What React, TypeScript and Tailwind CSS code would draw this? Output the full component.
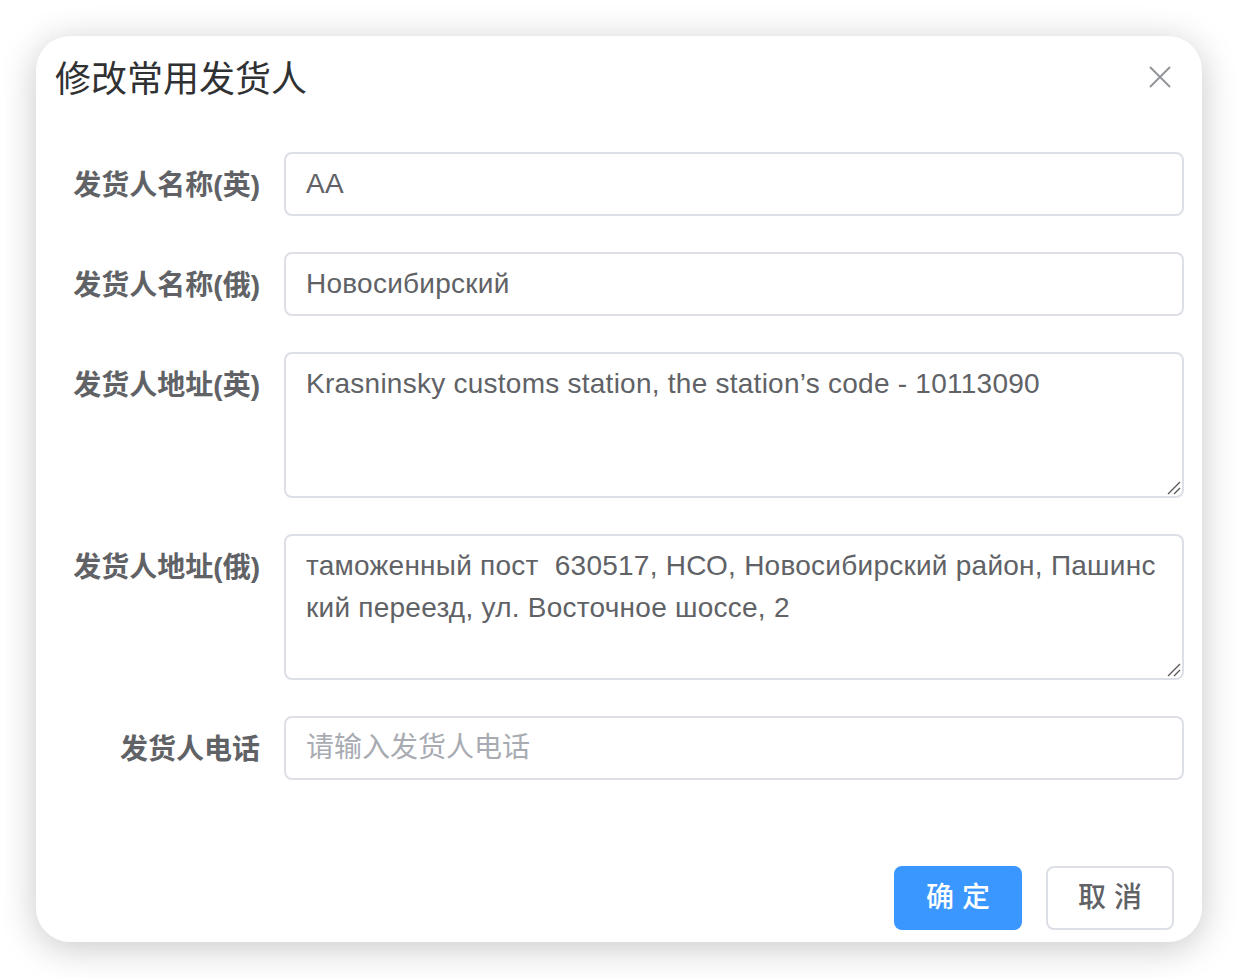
const font = "font-['Helvetica_Neue','Liberation_Sans','Noto_Sans_CJK_SC',sans-serif]";

const ResizeHandle = () => (
  <svg
    className="absolute right-[1px] bottom-[1px]"
    width="16"
    height="16"
    viewBox="0 0 16 16"
  >
    <line x1="15" y1="3" x2="3" y2="15" stroke="#555" strokeWidth="1.2" />
    <line x1="15" y1="9" x2="9" y2="15" stroke="#555" strokeWidth="1.2" />
  </svg>
);

interface RowProps {
  label: string;
  children: React.ReactNode;
}

const FormRow = ({ label, children }: RowProps) => (
  <div className="flex mb-[36px]">
    <div className="w-[228px] shrink-0 pr-[24px] translate-y-[2px] text-right text-[28px] leading-[64px] font-bold text-[#606266]">
      {label}
    </div>
    <div className="flex-1">{children}</div>
  </div>
);

const TextInput = ({ value, placeholder }: { value?: string; placeholder?: string }) => (
  <div className="h-[64px] border-2 border-[#dcdfe6] rounded-[8px] px-[20px] flex items-center text-[28px] tracking-[0.25px]">
    {value ? (
      <span className="text-[#606266]">{value}</span>
    ) : (
      <span className="text-[#a8abb2] tracking-normal">{placeholder}</span>
    )}
  </div>
);

const TextArea = ({ lines }: { lines: string[] }) => (
  <div className="relative h-[146px] border-2 border-[#dcdfe6] rounded-[8px] px-[20px] py-[9px] text-[28px] leading-[42px] tracking-[0.25px] text-[#606266] whitespace-pre">
    {lines.map((l, i) => (
      <div key={i}>{l}</div>
    ))}
    <ResizeHandle />
  </div>
);

export default function App() {
  return (
    <div className={`w-[1238px] h-[978px] bg-white p-[36px] ${font}`}>
      <div className="w-[1166px] h-[906px] bg-white rounded-[34px] shadow-[0_6px_36px_rgba(0,0,0,0.22)] flex flex-col">
        <div className="flex items-center justify-between pt-[20px] pl-[19px] pr-[31px]">
          <div className="text-[36px] leading-[48px] text-[#303133]">修改常用发货人</div>
          <svg width="22" height="22" viewBox="0 0 22 22" className="mt-[-6px]">
            <line x1="1" y1="1" x2="21" y2="21" stroke="#909399" strokeWidth="2" />
            <line x1="21" y1="1" x2="1" y2="21" stroke="#909399" strokeWidth="2" />
          </svg>
        </div>

        <div className="pt-[48px] pl-[20px] pr-[18px]">
          <FormRow label="发货人名称(英)">
            <TextInput value="AA" />
          </FormRow>
          <FormRow label="发货人名称(俄)">
            <TextInput value="Новосибирский" />
          </FormRow>
          <FormRow label="发货人地址(英)">
            <TextArea lines={["Krasninsky customs station, the station’s code - 10113090"]} />
          </FormRow>
          <FormRow label="发货人地址(俄)">
            <TextArea
              lines={[
                "таможенный пост  630517, НСО, Новосибирский район, Пашинс",
                "кий переезд, ул. Восточное шоссе, 2",
              ]}
            />
          </FormRow>
          <FormRow label="发货人电话">
            <TextInput placeholder="请输入发货人电话" />
          </FormRow>
        </div>

        <div className="flex justify-end gap-[24px] pr-[28px] pt-[50px]">
          <button className="w-[128px] h-[64px] rounded-[8px] bg-[#3a97ff] text-white text-[28px] font-medium">
            确 定
          </button>
          <button className="w-[128px] h-[64px] rounded-[8px] border-2 border-[#dcdfe6] bg-white text-[#606266] text-[28px] font-medium">
            取 消
          </button>
        </div>
      </div>
    </div>
  );
}
